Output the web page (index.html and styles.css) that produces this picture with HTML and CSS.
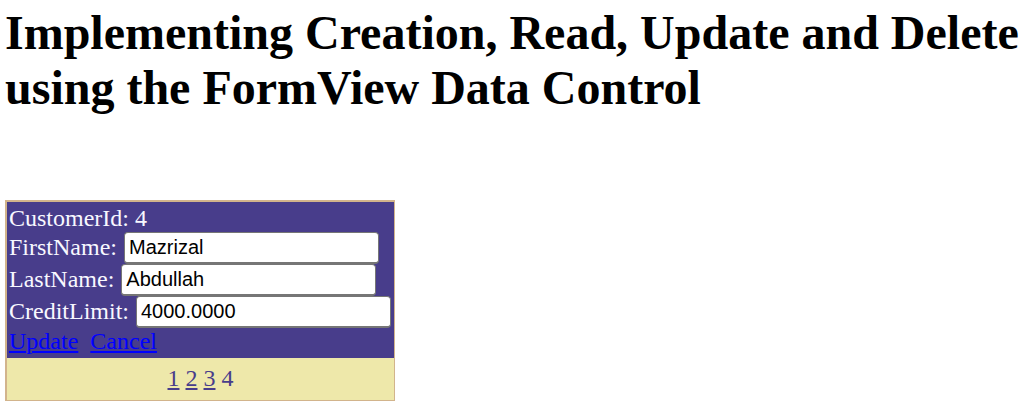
FILE: index.html
```html
<!DOCTYPE html>
<html lang="en">
<head>
<meta charset="utf-8">
<title>FormView</title>
<link rel="stylesheet" href="styles.css">
</head>
<body>
<h1 class="title">Implementing Creation, Read, Update and Delete using the FormView Data Control</h1>
<form class="form-view">
  <div class="edit">
    <div class="row id-row">CustomerId: 4</div>
    <div class="row"><label for="first">FirstName:</label><input class="field" id="first" type="text" value="Mazrizal"></div>
    <div class="row"><label for="last">LastName:</label><input class="field" id="last" type="text" value="Abdullah"></div>
    <div class="row"><label for="credit">CreditLimit:</label><input class="field" id="credit" type="text" value="4000.0000"></div>
    <div class="actions"><a href="#update">Update</a><a href="#cancel">Cancel</a></div>
  </div>
  <nav class="pager" aria-label="Records"><a href="#1">1</a><a href="#2">2</a><a href="#3">3</a><span>4</span></nav>
</form>
</body>
</html>
```
FILE: styles.css
```css
body {
  margin: 5px;
  background: #fff;
  color: #000;
  font: 24px/28px "Liberation Serif", "Times New Roman", serif;
}
.title {
  margin: 0 0 85px;
  font-size: 48px;
  line-height: 55px;
}
.form-view {
  box-sizing: border-box;
  width: fit-content;
  border: solid #d2b48c;
  border-width: 2px 1px 1px 2px;
}
.edit {
  padding: 2px 3px 4px 2px;
  background: #483d8b;
  color: #f8f8ff;
}
.row {
  display: flex;
  align-items: center;
  gap: 7px;
  min-height: 32px;
}
.row label {
  padding-bottom: 2px;
}
.id-row {
  min-height: 28px;
}
.field {
  box-sizing: border-box;
  width: 255px;
  height: 32px;
  padding: 0 4px;
  border: 1px solid #767676;
  border-bottom-width: 2px;
  border-radius: 4px;
  background: #fff;
  color: #000;
  font: 20px "Liberation Sans", Arial, sans-serif;
}
.actions {
  display: flex;
  gap: 12px;
  line-height: 26px;
}
.actions a {
  color: #00f;
}
.pager {
  display: flex;
  justify-content: center;
  gap: 6px;
  padding: 6px 0 8px;
  background: #eee8aa;
  color: #483d8b;
}
.pager a {
  color: #483d8b;
}
```
